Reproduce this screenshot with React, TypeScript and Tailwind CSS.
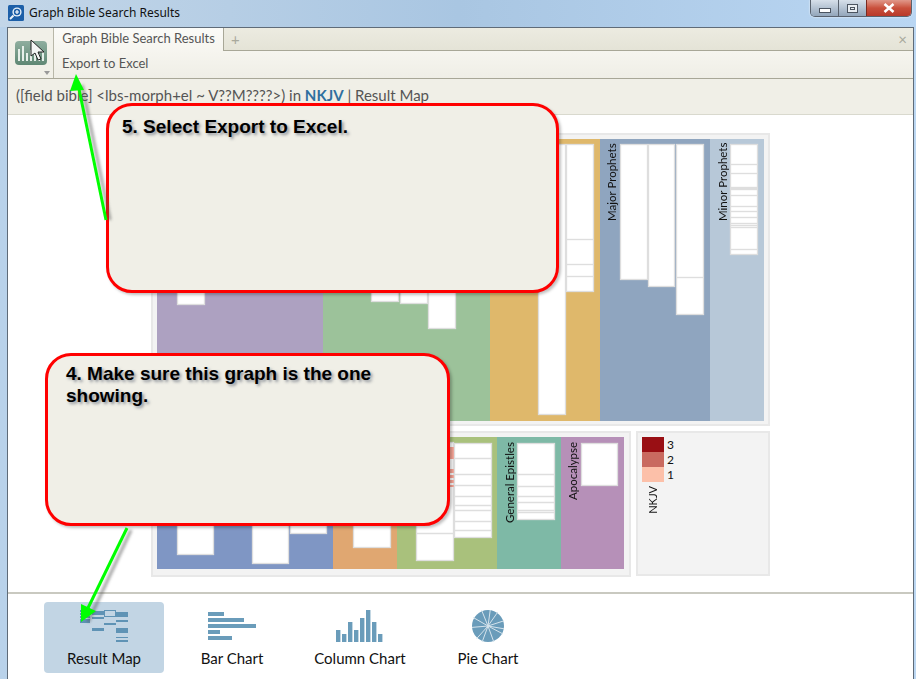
import type { ReactNode } from 'react'

type Rect = [number, number, number, number]

/* one white cell of the result map: x, y, w, h in group coordinates, plus separator lines and tinted verse marks */
type Cell = { r: Rect; lines?: number[]; marks?: Rect[] }

function Group({ w, color, label, labelX, height, cells }: { w: string; color: string; label?: string; labelX?: string; height: number; cells: Cell[] }) {
  return (
    <div className={`relative h-full ${w} ${color}`}>
      <svg className="absolute inset-0 h-full w-full">
        {cells.map((c, i) => (
          <g key={i}>
            <rect x={c.r[0] + 0.5} y={c.r[1] + 0.5} width={c.r[2] - 1} height={c.r[3] - 1} fill="#fff" stroke="#dedede" strokeWidth="1.3" />
            {c.lines?.map((l) => (
              <line key={l} x1={c.r[0]} x2={c.r[0] + c.r[2]} y1={l + 0.5} y2={l + 0.5} stroke="#dedede" strokeWidth="1.4" />
            ))}
            {c.marks?.map((m, j) => (
              <rect key={j} x={m[0]} y={m[1]} width={m[2]} height={m[3]} fill="#f8a596" />
            ))}
          </g>
        ))}
      </svg>
      {label && (
        <div className={`absolute top-[5px] ${labelX} [writing-mode:vertical-rl] rotate-180 text-[11.5px] leading-[14px] text-[#111] whitespace-nowrap`} style={{ height: height }}>
          {label}
        </div>
      )}
    </div>
  )
}

function Panel({ className, inner, children }: { className: string; inner: string; children: ReactNode }) {
  return (
    <div className={`border-2 border-[#e8e8e8] bg-[#f3f3f3] p-[4px] ${className}`}>
      <div className={`flex ${inner}`}>{children}</div>
    </div>
  )
}

function ResultMapIcon() {
  const rects: Rect[] = [
    [80, 610, 10, 2], [80, 613, 10, 2], [80, 616, 10, 2], [80, 619, 10, 4],
    [92, 611, 12, 4], [92, 617, 12, 2], [104, 610, 12, 1], [104, 616, 12, 1],
    [104, 610, 1, 7], [115, 610, 1, 7],
    [116, 612, 12, 5], [116, 620, 12, 2], [104, 623, 12, 2], [92, 628, 12, 3],
    [116, 628, 12, 5], [116, 637, 12, 1], [116, 640, 12, 2],
  ]
  return (
    <svg width="48" height="32" viewBox="80 610 48 32">
      {rects.map((r, i) => (
        <rect key={i} x={r[0]} y={r[1]} width={r[2]} height={r[3]} fill="#5f93b5" />
      ))}
    </svg>
  )
}

function BarIcon() {
  return (
    <svg width="48" height="32" viewBox="0 0 48 32">
      {[16, 36, 48, 12, 24].map((w, i) => (
        <rect key={i} x="0" y={2 + i * 6} width={w} height="4" fill="#6a9cba" />
      ))}
    </svg>
  )
}

function ColumnIcon() {
  return (
    <svg width="48" height="32" viewBox="0 0 48 32">
      {[12, 8, 20, 12, 24, 32, 20, 8].map((h, i) => (
        <rect key={i} x={i * 6} y={32 - h} width="4.4" height={h} fill="#6a9cba" />
      ))}
    </svg>
  )
}

function PieIcon() {
  const spokes = [8, 35, 72, 100, 118, 160, 200, 222, 265, 300, 338]
  return (
    <svg width="32" height="32" viewBox="0 0 32 32">
      <circle cx="16" cy="16" r="16" fill="#6a9cba" />
      {spokes.map((a) => (
        <line
          key={a}
          x1="16"
          y1="16"
          x2={16 + 17 * Math.sin((a * Math.PI) / 180)}
          y2={16 - 17 * Math.cos((a * Math.PI) / 180)}
          stroke="#d5e3ec"
          strokeWidth="1"
        />
      ))}
    </svg>
  )
}

function NavItem({ label, active, children }: { label: string; active?: boolean; children: ReactNode }) {
  return (
    <div className={`flex h-[71px] w-[120px] flex-col items-center rounded-[4px] pt-[8px] ${active ? 'bg-[#c2d5e4]' : ''}`}>
      <div className="flex h-[32px] items-center justify-center">{children}</div>
      <div className="mt-[6px] text-[15px] leading-[20px] text-[#111]">{label}</div>
    </div>
  )
}

function Callout({ className, children }: { className: string; children: ReactNode }) {
  return (
    <div className={`absolute rounded-[26px] border-[3px] border-[#ff0000] bg-[#f0efe7] font-['Liberation_Sans',Arial,sans-serif] text-[19px] leading-[22px] font-bold text-black [text-shadow:2px_2px_3px_rgba(60,70,90,0.55)] shadow-[2px_2px_3px_rgba(0,0,0,0.25)] ${className}`}>
      {children}
    </div>
  )
}

export default function App() {
  return (
    <div className="relative flex h-[679px] w-[916px] flex-col overflow-hidden bg-gradient-to-r from-[#b9d2ea] via-[#b4cfea] to-[#bcd7f2] font-['Lato','Open_Sans',sans-serif]">
      {/* Title bar */}
      <div className="flex h-[27px] shrink-0 items-start bg-gradient-to-r from-[#c3d6e8] via-[#a9c6e2] to-[#b9d6f3] pl-[8px]">
        <svg className="mt-[5px]" width="16" height="16" viewBox="0 0 16 16">
          <rect width="16" height="16" rx="1.5" fill="#1c5fa8" />
          <circle cx="9" cy="7" r="4.6" fill="#e9f2fa" />
          <circle cx="9" cy="7" r="3.2" fill="#1c5fa8" />
          <path d="M5.5 10.5 2 14" stroke="#e9f2fa" strokeWidth="2" />
          <path d="M9 5v4M7 7h4" stroke="#fff" strokeWidth="1.2" />
        </svg>
        <span className="mt-[4px] ml-[5px] font-['Noto_Sans',sans-serif] text-[12px] leading-[18px] text-[#111]">Graph Bible Search Results</span>
        <div className="mr-[4px] ml-auto flex h-[17px] overflow-hidden rounded-b-[5px] border border-t-0 border-[#59626e] shadow-[0_0_2px_#fff]">
          <div className="flex w-[28px] items-center justify-center border-r border-[#59626e] bg-gradient-to-b from-[#d7e0ea] to-[#93a6bb]">
            <div className="mt-[4px] h-[5px] w-[12px] border border-[#4b5460] bg-white" />
          </div>
          <div className="flex w-[27px] items-center justify-center bg-gradient-to-b from-[#d7e0ea] to-[#93a6bb]">
            <div className="flex h-[9px] w-[11px] items-center justify-center border border-[#4b5460] bg-[#e8edf2]">
              <div className="h-[3px] w-[5px] border border-[#4b5460]" />
            </div>
          </div>
          <div className="flex w-[45px] items-center justify-center border-l border-[#7a2a20] bg-gradient-to-b from-[#e0988a] via-[#c9503c] to-[#b8392a]">
            <svg width="12" height="10" viewBox="0 0 12 10">
              <path d="M1.5 1 10.5 9M10.5 1 1.5 9" stroke="#fff" strokeWidth="2.6" />
            </svg>
          </div>
        </div>
      </div>

      {/* Window body */}
      <div className="mr-[2px] ml-[7px] flex min-h-0 flex-1 flex-col border-t border-l border-r border-[#5f6b78] bg-white">
        <div className="flex h-[51px] shrink-0 border-b border-[#a8a797]">
          <div className="relative flex w-[46px] shrink-0 border-r border-[#b8b7a8] bg-[#f1f0e8]">
            <div className="mt-[13px] ml-[7px] flex h-[24px] w-[32px] items-end justify-center gap-[2px] rounded-[4px] bg-gradient-to-b from-[#8fae9f] to-[#5f8874] pb-[4px]">
              {['h-[12px]', 'h-[15px]', 'h-[8px]', 'h-[11px]', 'h-[14px]', 'h-[7px]', 'h-[9px]'].map((h) => (
                <div key={h} className={`w-[2px] bg-[#e6efe9] ${h}`} />
              ))}
            </div>
            <div className="absolute right-[3px] bottom-[3px] h-0 w-0 border-x-[3px] border-t-[4px] border-x-transparent border-t-[#999]" />
          </div>
          <div className="flex min-w-0 flex-1 flex-col">
            <div className="flex h-[23px] bg-gradient-to-b from-[#ecebe1] to-[#e4e3d6]">
              <div className="flex w-[170px] items-center justify-center border-r border-[#a8a797] bg-gradient-to-b from-[#fbfbf8] to-[#f6f5ef] pb-[2px] text-[13px] text-[#555]">
                Graph Bible Search Results
              </div>
              <div className="flex flex-1 items-center justify-between border-b border-[#a8a797] pr-[6px] pl-[7px] text-[#a9a99c]">
                <span className="text-[15px] leading-none">+</span>
                <span className="text-[15px] leading-none">×</span>
              </div>
            </div>
            <div className="flex flex-1 items-center bg-gradient-to-b from-[#f6f5ef] to-[#efeee6] pb-[2px] pl-[8px] text-[13px] text-[#555]">
              Export to Excel
            </div>
          </div>
        </div>
        <div className="flex h-[36px] shrink-0 items-center border-b border-[#d9d9ce] bg-[#f0efe7] pb-[2px] pl-[8px] text-[15px] text-[#555]">
          ([field bible] &lt;lbs-morph+el ~ V??M????&gt;) in&nbsp;<span className="font-bold text-[#2f6f9f]">NKJV</span>&nbsp;| Result Map
        </div>

        {/* Result map */}
        <div className="flex min-h-0 flex-1 flex-col items-start border-b-2 border-[#c9c9c0] pt-[18px] pl-[143px]">
          <Panel className="h-[293px] w-[619px]" inner="h-[282px]">
            <Group w="w-[166px]" color="bg-[#ada1c1]" height={80} cells={[{ r: [20, 5, 28, 161] }]} />
            <Group w="w-[167px]" color="bg-[#9cc29a]" height={80} cells={[{ r: [48, 5, 28, 158] }, { r: [77, 5, 28, 160] }, { r: [105, 5, 28, 185] }]} />
            <Group w="w-[110px]" color="bg-[#dfb86b]" height={80} cells={[{ r: [48, 5, 28, 271] }, { r: [76, 5, 28, 148], lines: [100, 125, 137] }]} />
            <Group w="w-[110px]" color="bg-[#8fa5bf]" label="Major Prophets" labelX="left-[5px]" height={77} cells={[{ r: [20, 5, 28, 136] }, { r: [48, 5, 27, 143] }, { r: [76, 5, 28, 171], lines: [138] }]} />
            <Group w="w-[54px]" color="bg-[#b7c8d8]" label="Minor Prophets" labelX="left-[6px]" height={77} cells={[{ r: [20, 5, 28, 111], lines: [25, 34, 48, 49, 50, 56, 67, 72, 78, 84, 86, 88, 110] }]} />
          </Panel>
          <div className="mt-[5px] flex gap-[5px]">
            <Panel className="h-[146px] w-[480px]" inner="h-[132px]">
              <Group w="w-[176px]" color="bg-[#7f96c4]" height={70} cells={[{ r: [20, 5, 37, 113] }, { r: [95, 5, 37, 122] }, { r: [133, 5, 37, 92] }]} />
              <Group w="w-[64px]" color="bg-[#e0a771]" height={70} cells={[{ r: [20, 5, 38, 106] }]} />
              <Group w="w-[100px]" color="bg-[#a9c17c]" height={70} cells={[
                { r: [19, 5, 38, 119], lines: [96], marks: [[53, 10, 4, 12], [53, 32, 4, 4], [53, 38, 4, 3], [53, 43, 4, 3], [53, 48, 4, 2]] },
                { r: [57, 6, 38, 95], lines: [21, 37, 48, 59, 68, 73, 84, 93, 97].slice(0, 8) },
              ]} />
              <Group w="w-[64px]" color="bg-[#7eb9a6]" label="General Epistles" labelX="left-[6px]" height={81} cells={[{ r: [20, 6, 38, 77], lines: [37, 49, 59, 65, 73, 75] }]} />
              <Group w="w-[63px]" color="bg-[#b690b8]" label="Apocalypse" labelX="left-[5px]" height={58} cells={[{ r: [20, 6, 37, 43] }]} />
            </Panel>
            <div className="flex h-[145px] w-[134px] flex-col border-2 border-[#e8e8e8] bg-[#f3f3f3] pt-[4px] pl-[4px]">
              <div className="flex h-[15px] items-center"><div className="h-[15px] w-[22px] bg-[#990f14]" /><span className="ml-[3px] text-[12px] text-[#111]">3</span></div>
              <div className="flex h-[15px] items-center"><div className="h-[15px] w-[22px] bg-[#c96a60]" /><span className="ml-[3px] text-[12px] text-[#111]">2</span></div>
              <div className="flex h-[15px] items-center"><div className="h-[15px] w-[22px] bg-[#fcc0a9]" /><span className="ml-[3px] text-[12px] text-[#111]">1</span></div>
              <div className="mt-[4px] ml-[4px] rotate-180 self-start text-[11px] leading-[14px] text-[#111] [writing-mode:vertical-rl]">NKJV</div>
            </div>
          </div>
        </div>

        {/* Chart type picker */}
        <div className="flex h-[85px] shrink-0 gap-[8px] pt-[8px] pl-[36px]">
          <NavItem label="Result Map" active><ResultMapIcon /></NavItem>
          <NavItem label="Bar Chart"><BarIcon /></NavItem>
          <NavItem label="Column Chart"><ColumnIcon /></NavItem>
          <NavItem label="Pie Chart"><PieIcon /></NavItem>
        </div>
      </div>

      {/* Tutorial callouts */}
      <Callout className="top-[103px] left-[106px] h-[190px] w-[453px] pt-[10px] pl-[13px]">5. Select Export to Excel.</Callout>
      <Callout className="top-[353px] left-[45px] h-[173px] w-[405px] pt-[7px] pr-[40px] pl-[18px]">4. Make sure this graph is the one showing.</Callout>

      {/* Arrows and mouse pointer */}
      <svg className="pointer-events-none absolute inset-0" width="916" height="679">
        <defs>
          <filter id="blur" x="-50%" y="-50%" width="200%" height="200%">
            <feGaussianBlur stdDeviation="1.5" />
          </filter>
        </defs>
        <g stroke="#555" strokeWidth="3" opacity="0.55" filter="url(#blur)">
          <path d="M110 220 82 85" />
          <path d="M131 530 88 622" />
        </g>
        <path d="M106 220 78 84" stroke="#00ff00" strokeWidth="3" />
        <path d="M76 74 84 90 70 91Z" fill="#00ff00" />
        <path d="M127 528 88 608" stroke="#00ff00" strokeWidth="3" />
        <path d="M81 622 81 604 96 611Z" fill="#00ff00" />
        <path d="M31 40V56L35 53 38 60 41 59 38 52H44Z" fill="#f4f6f4" stroke="#222" strokeWidth="1" />
      </svg>
    </div>
  )
}
